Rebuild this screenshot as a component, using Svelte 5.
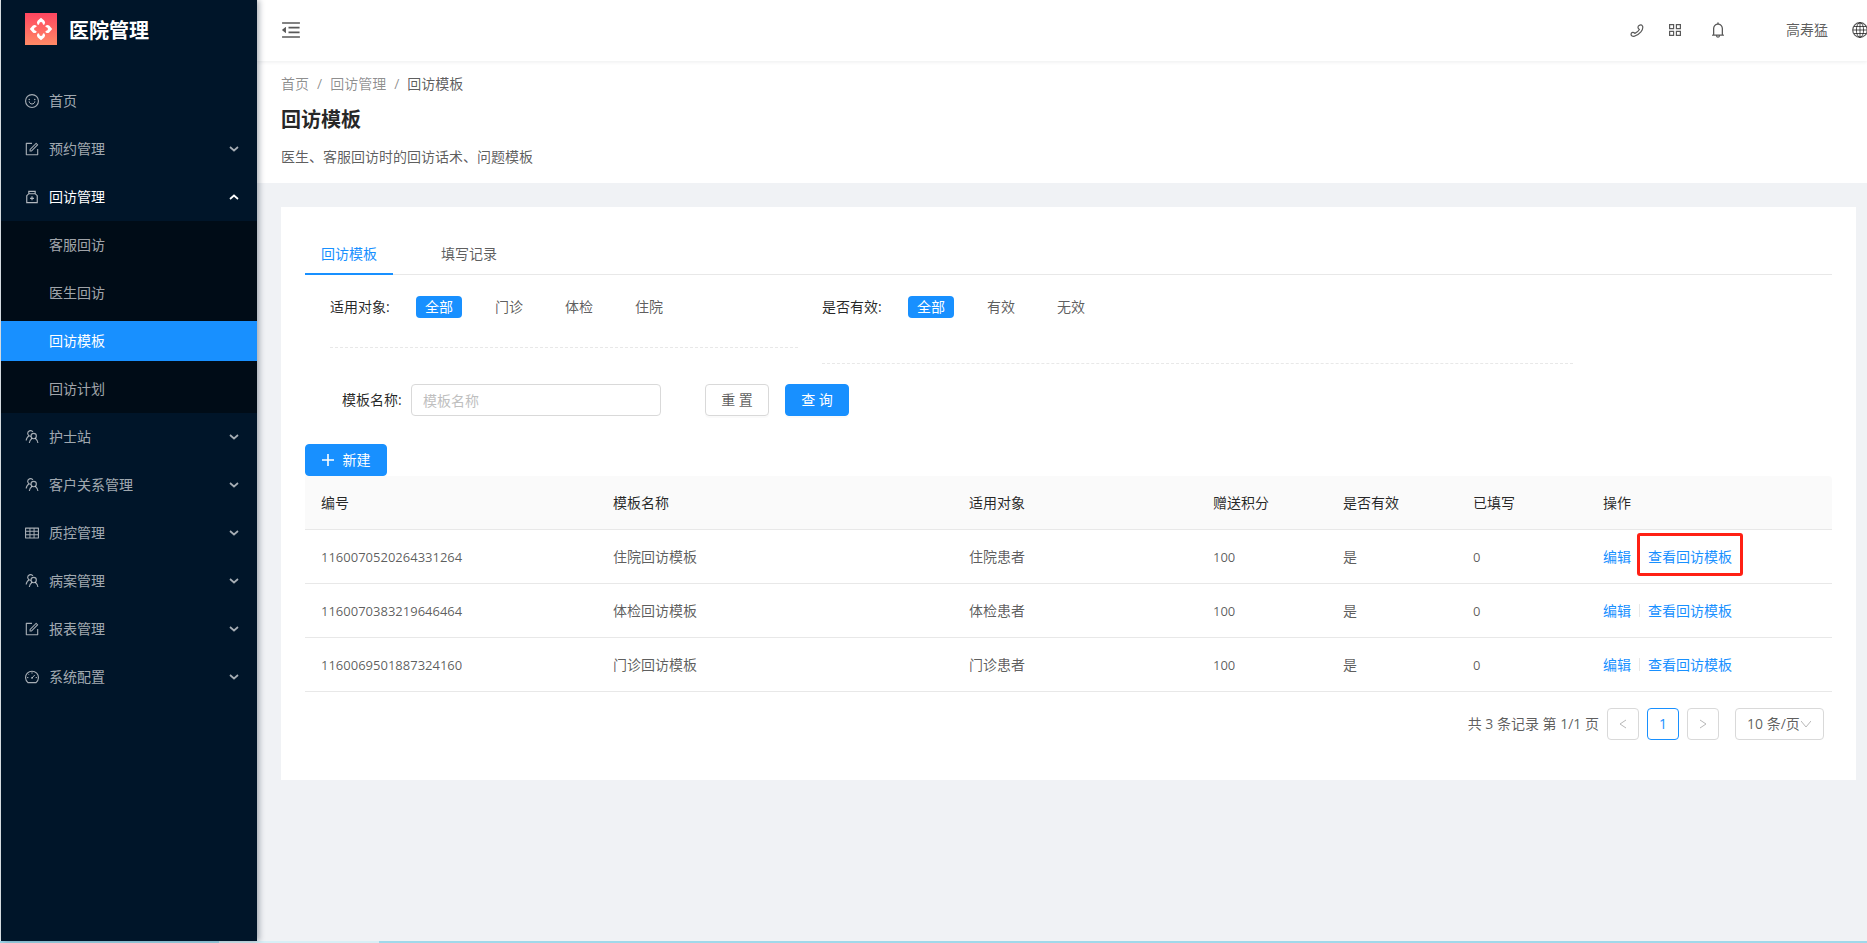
<script lang="ts">
  interface MenuItem {
    name: string;
    icon: string;
    open?: boolean;
    leaf?: boolean;
    children?: string[];
  }

  const menu: MenuItem[] = [
    { name: '首页', icon: 'smile', leaf: true },
    { name: '预约管理', icon: 'form' },
    {
      name: '回访管理',
      icon: 'medicine',
      open: true,
      children: ['客服回访', '医生回访', '回访模板', '回访计划'],
    },
    { name: '护士站', icon: 'team' },
    { name: '客户关系管理', icon: 'team' },
    { name: '质控管理', icon: 'table' },
    { name: '病案管理', icon: 'team' },
    { name: '报表管理', icon: 'form' },
    { name: '系统配置', icon: 'dashboard' },
  ];

  const tabs = ['回访模板', '填写记录'];
  const targets = ['全部', '门诊', '体检', '住院'];
  const states = ['全部', '有效', '无效'];

  const columns = [
    { title: '编号', cls: 'col-id' },
    { title: '模板名称', cls: 'col-name' },
    { title: '适用对象', cls: 'col-target' },
    { title: '赠送积分', cls: 'col-short' },
    { title: '是否有效', cls: 'col-short' },
    { title: '已填写', cls: 'col-short' },
    { title: '操作', cls: 'col-action' },
  ];

  const rows = [
    { id: '1160070520264331264', name: '住院回访模板', target: '住院患者', points: 100, valid: '是', filled: 0 },
    { id: '1160070383219646464', name: '体检回访模板', target: '体检患者', points: 100, valid: '是', filled: 0 },
    { id: '1160069501887324160', name: '门诊回访模板', target: '门诊患者', points: 100, valid: '是', filled: 0 },
  ];

  let selectedMenu = $state('回访模板');
  let activeTab = $state('回访模板');
  let target = $state('全部');
  let valid = $state('全部');
  let keyword = $state('');
  let marked = $state('1160070520264331264');

  function reset() {
    keyword = '';
    target = '全部';
    valid = '全部';
  }
</script>

{#snippet menuIcon(name: string)}
  <svg class="menu-icon" viewBox="64 64 896 896" fill="currentColor" aria-hidden="true">
    {#if name === 'smile'}
      <circle cx="512" cy="512" r="412" fill="none" stroke="currentColor" stroke-width="72" />
      <circle cx="336" cy="421" r="48" />
      <circle cx="688" cy="421" r="48" />
      <path d="M328 533c8 96 86 171 184 171s176-75 184-171" fill="none" stroke="currentColor" stroke-width="64" />
    {:else if name === 'form'}
      <path d="M904 512h-56c-4.400 0-8 3.600-8 8v320H184V184h320c4.400 0 8-3.600 8-8v-56c0-4.400-3.600-8-8-8H144c-17.700 0-32 14.300-32 32v736c0 17.700 14.300 32 32 32h736c17.700 0 32-14.300 32-32V520c0-4.400-3.600-8-8-8z" />
      <path d="M355.900 534.900L354 653.800c-.1 8.900 7.100 16.200 16 16.200h.4l118-2.900c2-.1 4-.9 5.400-2.300l415.900-415c3.100-3.100 3.100-8.200 0-11.300L785.400 114.300c-1.600-1.600-3.600-2.300-5.700-2.300s-4.100.8-5.700 2.300l-415.800 415a8.300 8.300 0 0 0-2.300 5.600zm63.500 23.600L779.700 199l45.200 45.100-360.500 359.700-45.700 1.100.7-46.400z" />
    {:else if name === 'medicine'}
      <path d="M270 150h484M310 150v150M714 150v150M310 300h404l134 130v440H176V430z" fill="none" stroke="currentColor" stroke-width="72" />
      <path d="M476 470h72v90h90v72h-90v90h-72v-90h-90v-72h90z" />
    {:else if name === 'team'}
      <path d="M440 460a178 178 0 1 1 130-270M350 420C220 500 150 600 140 740" fill="none" stroke="currentColor" stroke-width="72" />
      <circle cx="620" cy="450" r="170" fill="none" stroke="currentColor" stroke-width="72" />
      <path d="M520 590C400 680 350 780 340 900M720 590c110 90 160 190 170 310" fill="none" stroke="currentColor" stroke-width="72" />
    {:else if name === 'table'}
      <path d="M928 160H96c-17.700 0-32 14.300-32 32v640c0 17.700 14.300 32 32 32h832c17.700 0 32-14.300 32-32V192c0-17.700-14.300-32-32-32zm-40 208H676V232h212v136zm0 224H676V432h212v160zM412 432h200v160H412V432zm200-64H412V232h200v136zm-476 64h212v160H136V432zm0-200h212v136H136V232zm0 424h212v136H136V656zm276 0h200v136H412V656zm476 136H676V656h212v136z" />
    {:else}
      <path d="M250 870a412 412 0 1 1 524 0z" fill="none" stroke="currentColor" stroke-width="72" />
      <path d="M512 210v90M256 306l54 54M190 550h90M744 550h90M512 570l180-190" fill="none" stroke="currentColor" stroke-width="64" />
      <circle cx="512" cy="570" r="56" />
    {/if}
  </svg>
{/snippet}

{#snippet tagSelect(options: string[], value: string, pick: (v: string) => void)}
  <div class="tags">
    {#each options as option}
      <button class="tag" class:checked={option === value} onclick={() => pick(option)}>{option}</button>
    {/each}
  </div>
{/snippet}

<div class="page">
  <div class="layout">
    <aside class="sider">
      <a class="logo" href="#home">
        <svg class="logo-mark" viewBox="0 0 32 32" aria-hidden="true">
          <defs>
            <linearGradient id="logo-bg" x1="0" y1="0" x2="0" y2="1">
              <stop offset="0" stop-color="#ff4560" />
              <stop offset="1" stop-color="#ff8a66" />
            </linearGradient>
          </defs>
          <rect width="32" height="32" fill="url(#logo-bg)" />
          <g fill="#fff">
            {#each [0, 90, 180, 270] as angle}
              <path
                transform="rotate({angle} 16 16)"
                d="M16 4.800L19.200 7.600Q20.800 9.200 19.600 11.200Q18.600 12.200 17.900 11.200Q17.600 9 16 9Q14.400 9 14.100 11.200Q13.400 12.200 12.400 11.200Q11.200 9.200 12.800 7.600Z"
              />
            {/each}
          </g>
        </svg>
        <span class="logo-text">医院管理</span>
      </a>

      <nav class="menu">
        {#each menu as item}
          <a class="menu-item" class:open={item.open} href="#menu">
            {@render menuIcon(item.icon)}
            <span class="menu-name">{item.name}</span>
            {#if !item.leaf}
              <svg class="arrow" class:up={item.open} viewBox="0 0 10 6" aria-hidden="true">
                <path d="M1 1l4 3.500l4-3.500" fill="none" stroke="currentColor" stroke-width="1.700" />
              </svg>
            {/if}
          </a>
          {#if item.children}
            <div class="submenu">
              {#each item.children as child}
                <a
                  class="submenu-item"
                  class:selected={child === selectedMenu}
                  href="#menu"
                  onclick={() => (selectedMenu = child)}>{child}</a
                >
              {/each}
            </div>
          {/if}
        {/each}
      </nav>
    </aside>

    <div class="main">
      <header class="header">
        <button class="icon-btn" aria-label="收起菜单">
          <svg class="fold" viewBox="64 64 896 896" fill="currentColor">
            <path d="M408 442h480c4.400 0 8-3.600 8-8v-56c0-4.400-3.600-8-8-8H408c-4.400 0-8 3.600-8 8v56c0 4.400 3.600 8 8 8zm-8 204c0 4.400 3.600 8 8 8h480c4.400 0 8-3.600 8-8v-56c0-4.400-3.600-8-8-8H408c-4.400 0-8 3.600-8 8v56zm504-486H120c-4.400 0-8 3.600-8 8v56c0 4.400 3.600 8 8 8h784c4.400 0 8-3.600 8-8v-56c0-4.400-3.600-8-8-8zm0 632H120c-4.400 0-8 3.600-8 8v56c0 4.400 3.600 8 8 8h784c4.400 0 8-3.600 8-8v-56c0-4.400-3.600-8-8-8zM115.400 518.900L271.700 642c5.800 4.600 14.400.5 14.400-6.900V388.900c0-7.400-8.500-11.500-14.400-6.900L115.400 505.100a8.740 8.740 0 0 0 0 13.800z" />
          </svg>
        </button>
        <div class="header-right">
          <button class="icon-btn phone" aria-label="电话">
            <svg viewBox="0 0 14 14" fill="none" stroke="currentColor" stroke-width="1.200" stroke-linejoin="round">
              <path d="M9 2.500Q11.300 1 12.600 3.200Q13.400 5.600 10.900 8.900Q7.800 12.700 4 13.300Q1.200 13.400 1 11.200Q1.100 9.600 2.600 9.400Q4 9.300 4.900 10.400Q7.700 9.300 9.400 6.500Q8.200 5.900 8 4.700Q7.900 3.200 9 2.500Z" />
            </svg>
          </button>
          <button class="icon-btn grid" aria-label="应用">
            <svg viewBox="0 0 14 14" fill="none" stroke="currentColor" stroke-width="1.200">
              <path d="M1.600 1.600h4v4h-4zM8.400 1.600h4v4h-4zM1.600 8.400h4v4h-4zM8.400 8.400h4v4h-4z" />
            </svg>
          </button>
          <button class="icon-btn bell" aria-label="通知">
            <svg viewBox="64 64 896 896" fill="currentColor">
              <path d="M816 768h-24V428c0-141.100-104.300-257.800-240-277.200V112c0-22.100-17.900-40-40-40s-40 17.900-40 40v38.800C336.300 170.200 232 286.900 232 428v340h-24c-17.700 0-32 14.300-32 32v32c0 4.400 3.600 8 8 8h216c0 61.800 50.200 112 112 112s112-50.200 112-112h216c4.400 0 8-3.600 8-8v-32c0-17.700-14.300-32-32-32zM512 888c-26.500 0-48-21.500-48-48h96c0 26.500-21.500 48-48 48zM304 768V428c0-55.600 21.600-107.800 60.900-147.100S456.400 220 512 220c55.600 0 107.800 21.600 147.100 60.900S720 372.400 720 428v340H304z" />
            </svg>
          </button>
          <span class="user">高寿猛</span>
          <button class="icon-btn globe" aria-label="语言">
            <svg viewBox="0 0 16 16" fill="none" stroke="currentColor">
              <circle cx="8" cy="8" r="7.300" stroke-width="1.200" />
              <ellipse cx="8" cy="8" rx="3.600" ry="7.300" />
              <path d="M8 1v14M1 8h14M2 4.500h12M2 11.500h12" />
            </svg>
          </button>
        </div>
      </header>

      <section class="page-header">
        <nav class="breadcrumb">
          <a href="#home">首页</a>
          <span class="sep">/</span>
          <a href="#visit">回访管理</a>
          <span class="sep">/</span>
          <span class="current">回访模板</span>
        </nav>
        <h1>回访模板</h1>
        <p>医生、客服回访时的回访话术、问题模板</p>
      </section>

      <main class="card">
        <div class="tabs" role="tablist">
          {#each tabs as tab}
            <button
              class="tab"
              class:active={tab === activeTab}
              role="tab"
              aria-selected={tab === activeTab}
              onclick={() => (activeTab = tab)}>{tab}</button
            >
          {/each}
        </div>

        <div class="filters">
          <div class="filter">
            <span class="label">适用对象:</span>
            {@render tagSelect(targets, target, (v) => (target = v))}
          </div>
          <div class="filter tall">
            <span class="label">是否有效:</span>
            {@render tagSelect(states, valid, (v) => (valid = v))}
          </div>
        </div>

        <form class="search" onsubmit={(e) => e.preventDefault()}>
          <label class="label" for="template-name">模板名称:</label>
          <input id="template-name" type="text" placeholder="模板名称" bind:value={keyword} />
          <button class="btn reset" type="button" onclick={reset}>重 置</button>
          <button class="btn primary" type="submit">查 询</button>
        </form>

        <button class="btn primary create">
          <svg viewBox="0 0 12 12" aria-hidden="true">
            <path d="M6 0v12M0 6h12" stroke="currentColor" stroke-width="1.600" />
          </svg>
          新建
        </button>

        <table>
          <colgroup>
            {#each columns as column}
              <col class={column.cls} />
            {/each}
          </colgroup>
          <thead>
            <tr>
              {#each columns as column}
                <th>{column.title}</th>
              {/each}
            </tr>
          </thead>
          <tbody>
            {#each rows as row}
              <tr>
                <td class="num">{row.id}</td>
                <td>{row.name}</td>
                <td>{row.target}</td>
                <td class="num">{row.points}</td>
                <td>{row.valid}</td>
                <td class="num">{row.filled}</td>
                <td>
                  <div class="actions">
                    <a href="#edit">编辑</a>
                    <span class="divider"></span>
                    <a class="view" class:marked={row.id === marked} href="#view">查看回访模板</a>
                  </div>
                </td>
              </tr>
            {/each}
          </tbody>
        </table>

        <div class="pagination">
          <span class="total">共 3 条记录 第 1/1 页</span>
          <button class="pager" aria-label="上一页" disabled>
            <svg viewBox="0 0 8 10"><path d="M7 1L1 5l6 4" /></svg>
          </button>
          <button class="pager current">1</button>
          <button class="pager" aria-label="下一页" disabled>
            <svg viewBox="0 0 8 10"><path d="M1 1l6 4l-6 4" /></svg>
          </button>
          <div class="size">
            <select aria-label="每页条数">
              <option>10 条/页</option>
              <option>20 条/页</option>
              <option>50 条/页</option>
            </select>
            <svg viewBox="0 0 10 8" aria-hidden="true"><path d="M0 1l5 6l5-6" /></svg>
          </div>
        </div>
      </main>
    </div>
  </div>
  <div class="strip"></div>
</div>

<style>
  :global(body) {
    background: #f0f2f5;
  }

  .page,
  .page :global(*) {
    box-sizing: border-box;
  }

  .page {
    display: flex;
    flex-direction: column;
    min-height: 100vh;
    color: rgba(0, 0, 0, 0.65);
    font-family: 'Open Sans', 'Noto Sans CJK SC', sans-serif;
    font-size: 14px;
    line-height: 22px;
  }

  button,
  input,
  select {
    font: inherit;
    color: inherit;
  }

  button {
    padding: 0;
    border: 0;
    background: none;
    cursor: pointer;
  }

  a {
    color: #1890ff;
    text-decoration: none;
  }

  svg {
    display: block;
  }

  .layout {
    display: flex;
    flex: 1;
    border-left: 1px solid #e6ecef;
  }

  .sider {
    flex: none;
    width: 256px;
    background: #001529;
    box-shadow: 2px 0 6px rgba(0, 21, 41, 0.35);
    z-index: 2;
  }

  .logo {
    display: flex;
    gap: 12px;
    height: 61px;
    padding: 13px 24px 0;
  }

  .logo-mark {
    width: 32px;
    height: 32px;
  }

  .logo-text {
    color: #fff;
    font-size: 20px;
    font-weight: 600;
    line-height: 36px;
  }

  .menu {
    padding: 16px 0;
  }

  .menu-item,
  .submenu-item {
    display: flex;
    align-items: center;
    height: 48px;
    padding: 0 18px 0 24px;
    color: rgba(255, 255, 255, 0.65);
  }

  .menu-item.open {
    color: #fff;
  }

  .menu-icon {
    width: 14px;
    height: 14px;
    margin-right: 10px;
  }

  .open .menu-icon {
    opacity: 0.7;
  }

  .menu-name {
    flex: 1;
  }

  .arrow {
    width: 10px;
    height: 6px;
  }

  .arrow.up {
    transform: rotate(180deg);
  }

  .submenu {
    padding: 4px 0;
    background: #000c17;
  }

  .submenu-item {
    height: 40px;
    margin-bottom: 8px;
    padding-left: 48px;
  }

  .submenu-item:last-child {
    margin-bottom: 0;
  }

  .submenu-item.selected {
    background: #1890ff;
    color: #fff;
  }

  .main {
    flex: 1;
    min-width: 0;
    background: #f0f2f5;
  }

  .header {
    position: relative;
    display: flex;
    align-items: center;
    justify-content: space-between;
    height: 61px;
    padding: 0 0 2px 24px;
    background: #fff;
    box-shadow: 0 1px 4px rgba(0, 21, 41, 0.08);
  }

  .fold {
    width: 20px;
    height: 20px;
  }

  .header-right {
    display: flex;
    align-items: center;
  }

  .phone svg,
  .grid svg {
    width: 14px;
    height: 14px;
  }

  .bell svg,
  .globe svg {
    width: 16px;
    height: 16px;
  }

  .grid {
    margin-left: 24px;
  }

  .bell {
    margin-left: 28px;
  }

  .user {
    margin-left: 60px;
  }

  .globe {
    width: 15px;
    margin-left: 24px;
    overflow: hidden;
  }

  .page-header {
    padding: 12px 24px 15px;
    background: #fff;
  }

  .breadcrumb {
    display: flex;
    gap: 8px;
  }

  .breadcrumb a,
  .sep {
    color: rgba(0, 0, 0, 0.45);
  }

  h1 {
    margin: 10px 0 11px;
    color: rgba(0, 0, 0, 0.85);
    font-size: 20px;
    font-weight: 600;
    line-height: 30px;
  }

  p {
    margin: 0;
  }

  .card {
    margin: 24px 11px 24px 24px;
    padding: 24px;
    background: #fff;
  }

  .tabs {
    display: flex;
    gap: 32px;
    height: 44px;
    border-bottom: 1px solid #e8e8e8;
  }

  .tab {
    height: 44px;
    padding: 4px 16px 0;
    border-bottom: 2px solid transparent;
  }

  .tab.active {
    border-color: #1890ff;
    color: #1890ff;
  }

  .filters {
    display: grid;
    grid-template-columns: 468fr 751fr 235fr;
    gap: 24px;
    align-items: start;
    padding: 21px 0 0 25px;
  }

  .filter {
    display: flex;
    padding-bottom: 29px;
    border-bottom: 1px dashed #e8e8e8;
  }

  .filter.tall {
    padding-bottom: 45px;
  }

  .label {
    color: rgba(0, 0, 0, 0.85);
  }

  .filter .label {
    width: 86px;
  }

  .tags {
    display: flex;
    gap: 24px;
  }

  .tag {
    height: 22px;
    padding: 0 9px;
    border-radius: 4px;
    line-height: 22px;
  }

  .tag.checked {
    background: #1890ff;
    color: #fff;
  }

  .search {
    display: flex;
    align-items: center;
    padding: 20px 0 28px 37px;
  }

  .search .label {
    width: 69px;
  }

  .search input {
    width: 250px;
    height: 32px;
    margin-right: 44px;
    padding: 0 11px;
    border: 1px solid #d9d9d9;
    border-radius: 4px;
  }

  .search input::placeholder {
    color: #bfbfbf;
    opacity: 1;
  }

  .btn {
    display: flex;
    align-items: center;
    justify-content: center;
    width: 64px;
    height: 32px;
    border: 1px solid #d9d9d9;
    border-radius: 4px;
    box-shadow: 0 2px 0 rgba(0, 0, 0, 0.02);
  }

  .reset {
    margin-right: 16px;
  }

  .primary {
    border-color: #1890ff;
    background: #1890ff;
    color: #fff;
  }

  .create {
    gap: 9px;
    width: 82px;
  }

  .create svg {
    width: 12px;
    height: 12px;
  }

  table {
    width: 100%;
    table-layout: fixed;
    border-collapse: separate;
    border-spacing: 0;
  }

  .col-id {
    width: 292px;
  }

  .col-name {
    width: 356px;
  }

  .col-target {
    width: 244px;
  }

  .col-short {
    width: 130px;
  }

  .col-action {
    width: 245px;
  }

  th,
  td {
    height: 54px;
    padding: 0 16px;
    border-bottom: 1px solid #e8e8e8;
    text-align: left;
  }

  th {
    background: #fafafa;
    color: rgba(0, 0, 0, 0.85);
    font-weight: 400;
  }

  th:last-child {
    border-top-right-radius: 4px;
  }

  .num {
    font-size: 13px;
  }

  .actions {
    display: flex;
    align-items: center;
  }

  .divider {
    width: 1px;
    height: 13px;
    margin: 0 8px;
    background: #e8e8e8;
  }

  .view {
    position: relative;
  }

  /* frame drawn over the cell, covers the divider */
  .marked::after {
    content: '';
    position: absolute;
    inset: -13px -11px -8px;
    border: 3px solid #ff2014;
    border-radius: 3px;
  }

  .pagination {
    display: flex;
    align-items: center;
    justify-content: flex-end;
    gap: 8px;
    padding: 16px 8px;
  }

  .pager {
    display: flex;
    align-items: center;
    justify-content: center;
    width: 32px;
    height: 32px;
    border: 1px solid #d9d9d9;
    border-radius: 4px;
    color: rgba(0, 0, 0, 0.25);
  }

  .pager.current {
    border-color: #1890ff;
    color: #1890ff;
  }

  .pager svg {
    width: 8px;
    height: 10px;
  }

  .pager path,
  .size path {
    fill: none;
    stroke: #b8b8b8;
  }

  .size {
    position: relative;
    margin-left: 8px;
  }

  .size select {
    width: 89px;
    height: 32px;
    padding: 0 11px;
    border: 1px solid #d9d9d9;
    border-radius: 4px;
    appearance: none;
    background: #fff;
  }

  .size svg {
    position: absolute;
    top: 12px;
    right: 13px;
    width: 10px;
    height: 8px;
    pointer-events: none;
  }

  .strip {
    height: 2px;
    background: linear-gradient(90deg, #a0d8ea 219px, #d8eff6 219px, #d8eff6 379px, #a0d8ea 379px);
  }
</style>
